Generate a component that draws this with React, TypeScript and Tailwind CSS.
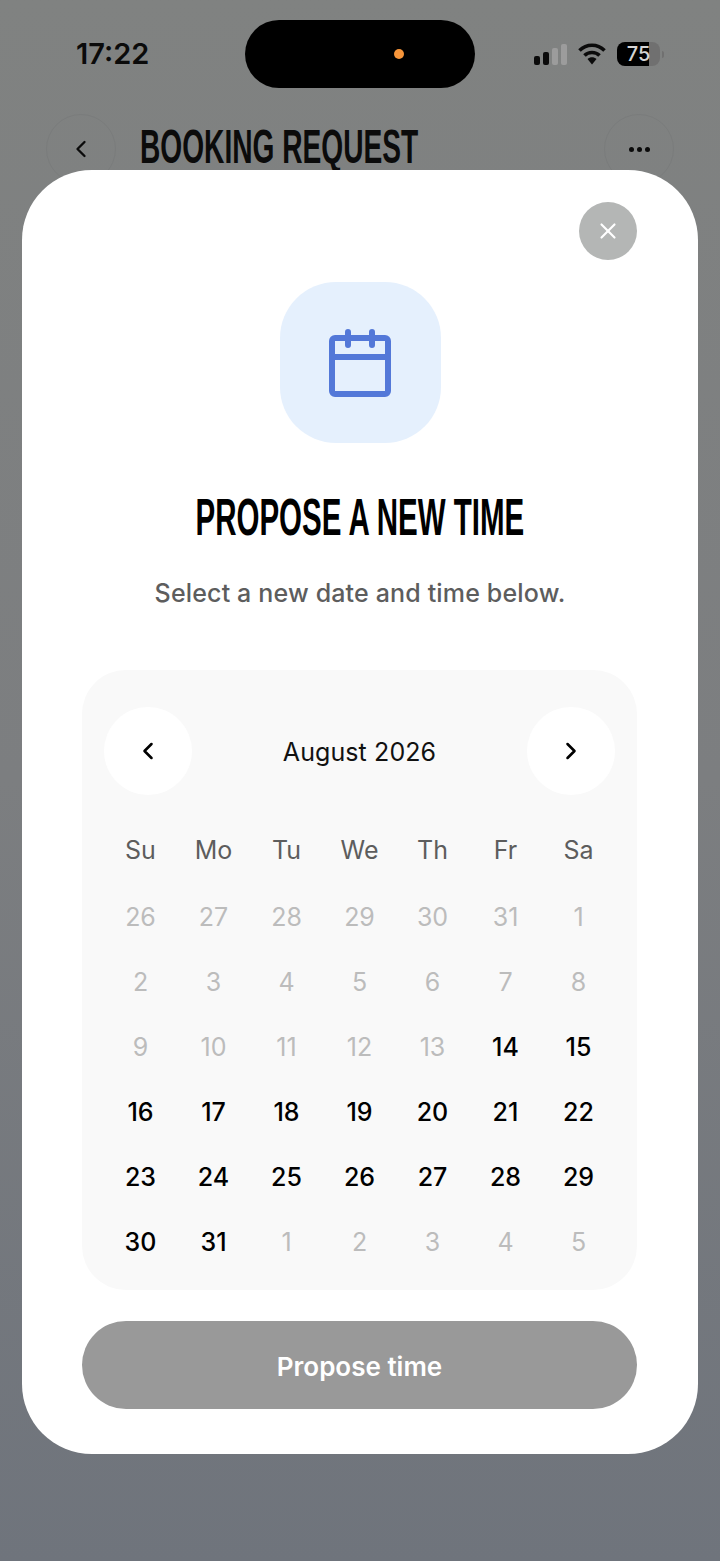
import { ChevronLeft, ChevronRight, X } from "lucide-react";

const weekDays = ["Su", "Mo", "Tu", "We", "Th", "Fr", "Sa"];

// first row is July's tail, 1-13 are past, so only 14-31 are selectable
const days: { label: number; active: boolean }[] = [
  ...[26, 27, 28, 29, 30, 31].map((label) => ({ label, active: false })),
  ...Array.from({ length: 31 }, (_, i) => ({ label: i + 1, active: i + 1 >= 14 })),
  ...[1, 2, 3, 4, 5].map((label) => ({ label, active: false })),
];

function StatusBar() {
  return (
    <div className="flex h-[88px] items-center pt-[20px]">
      <span className="ml-[76px] w-[80px] text-[29px] font-semibold leading-none text-[#0b0b0b] font-['Inter',sans-serif] -mt-[1px]">
        17:22
      </span>
      <div className="ml-[89px] flex h-[68px] w-[230px] items-center justify-end rounded-full bg-black pr-[71px]">
        <span className="h-[10px] w-[10px] rounded-full bg-[#f7953a]" />
      </div>
      <div className="ml-[59px] flex items-center">
        <div className="flex items-end gap-[3px]">
          <span className="h-[9px] w-[6px] rounded-[2px] bg-[#0b0b0b]" />
          <span className="h-[13px] w-[6px] rounded-[2px] bg-[#0b0b0b]" />
          <span className="h-[17px] w-[6px] rounded-[2px] bg-[#9c9c9c]" />
          <span className="h-[21px] w-[6px] rounded-[2px] bg-[#9c9c9c]" />
        </div>
        <svg className="ml-[11px]" width="28" height="22" viewBox="0 0 28 22" fill="none" stroke="#0b0b0b" strokeWidth="3.6">
          <path d="M1.5 7.5C8.5 .5 19.5 .5 26.5 7.5" />
          <path d="M6.5 12.5C10.5 8.5 17.5 8.5 21.5 12.5" />
          <path d="M9.5 16 14 21.5 18.5 16C16 13.6 12 13.6 9.5 16Z" fill="#0b0b0b" stroke="none" />
        </svg>
        <div className="relative ml-[11px] h-[24px] w-[43px] overflow-hidden rounded-[8px] bg-[#707070]">
          <div className="h-full w-[32px] bg-black" />
          <span className="absolute inset-0 flex items-center justify-center text-[20px] font-medium leading-none text-[#d4d4d4] font-['Inter',sans-serif]">
            75
          </span>
        </div>
        <span className="ml-[2px] h-[7px] w-[2px] rounded-r-full bg-[#707070]" />
      </div>
    </div>
  );
}

function PageHeader() {
  return (
    <div className="mt-[26px] flex items-start pl-[46px] pr-[46px]">
      <div className="flex h-[70px] w-[70px] items-center justify-center rounded-full border border-[#7a7c7c] text-[#0b0b0b]">
        <ChevronLeft size={28} strokeWidth={2} />
      </div>
      <h2 className="ml-[24px] mt-[4px] w-[278px] origin-left scale-x-[0.586] whitespace-nowrap text-[48px] font-bold leading-[58px] text-[#0b0b0b] font-['Liberation_Sans',sans-serif]">
        BOOKING REQUEST
      </h2>
      <div className="ml-auto flex h-[70px] w-[70px] items-center justify-center gap-[3px] rounded-full border border-[#7a7c7c]">
        <span className="h-[5px] w-[5px] rounded-full bg-[#0b0b0b]" />
        <span className="h-[5px] w-[5px] rounded-full bg-[#0b0b0b]" />
        <span className="h-[5px] w-[5px] rounded-full bg-[#0b0b0b]" />
      </div>
    </div>
  );
}

function Calendar() {
  return (
    <div className="mt-[61px] ml-[60px] h-[620px] w-[555px] self-start rounded-[44px] bg-[#f9f9f9] px-[22px] pt-[37px]">
      <div className="flex items-center justify-between">
        <button className="flex h-[88px] w-[88px] items-center justify-center rounded-full bg-white text-black">
          <ChevronLeft size={28} strokeWidth={2.2} />
        </button>
        <span className="pt-[4px] text-[25px] font-normal tracking-[0.1px] text-[#111] font-['Inter',sans-serif]">August 2026</span>
        <button className="flex h-[88px] w-[88px] items-center justify-center rounded-full bg-white text-black">
          <ChevronRight size={28} strokeWidth={2.2} />
        </button>
      </div>
      <div className="mt-[23px] grid grid-cols-7 auto-rows-[65px] w-[511px] font-['Inter',sans-serif] text-[25px]">
        {weekDays.map((d) => (
          <div key={d} className="flex h-[66px] items-center justify-center text-[#5d5d5d]">
            {d}
          </div>
        ))}
        {days.map((d, i) => (
          <div
            key={i}
            className={`flex items-center justify-center pt-[4px] ${d.active ? "font-[450] text-black" : "text-[#bcbcbc]"}`}
          >
            {d.label}
          </div>
        ))}
      </div>
    </div>
  );
}

export default function App() {
  return (
    <div className="relative h-[1561px] w-[720px] overflow-hidden bg-gradient-to-b from-[#808281] via-[#7c7e80] to-[#6f747c]">
      <StatusBar />
      <PageHeader />

      <div className="absolute left-[22px] top-[170px] flex h-[1284px] w-[676px] flex-col items-center rounded-[70px] bg-white pt-[32px]">
        <div className="flex w-full justify-end pr-[61px]">
          <button className="flex h-[58px] w-[58px] items-center justify-center rounded-full bg-[#b4b6b5] text-white">
            <X size={26} strokeWidth={2} />
          </button>
        </div>

        <div className="mt-[22px] flex h-[161px] w-[161px] items-center justify-center rounded-[56px] bg-[#e5f0fd]">
          <svg width="62" height="68" viewBox="0 0 62 68" fill="none" stroke="#5378d8" strokeWidth="6" strokeLinecap="round">
            <rect x="3" y="9" width="56" height="56" rx="3" />
            <path d="M3 28H59" strokeLinecap="butt" />
            <path d="M19 3V16M43 3V16" />
          </svg>
        </div>

        <h1 className="mt-[42px] whitespace-nowrap scale-x-[0.567] text-[52px] font-bold leading-[64px] text-black font-['Liberation_Sans',sans-serif]">
          PROPOSE A NEW TIME
        </h1>
        <p className="mt-[28px] text-[25px] font-medium leading-[32px] tracking-[0.16px] text-[#5d5d5d] font-['Inter',sans-serif]">
          Select a new date and time below.
        </p>

        <Calendar />

        <button className="mt-[31px] ml-[60px] h-[88px] w-[555px] self-start rounded-full bg-[#999999] pt-[2px] text-[26px] font-semibold text-white font-['Inter',sans-serif]">
          Propose time
        </button>
      </div>
    </div>
  );
}
